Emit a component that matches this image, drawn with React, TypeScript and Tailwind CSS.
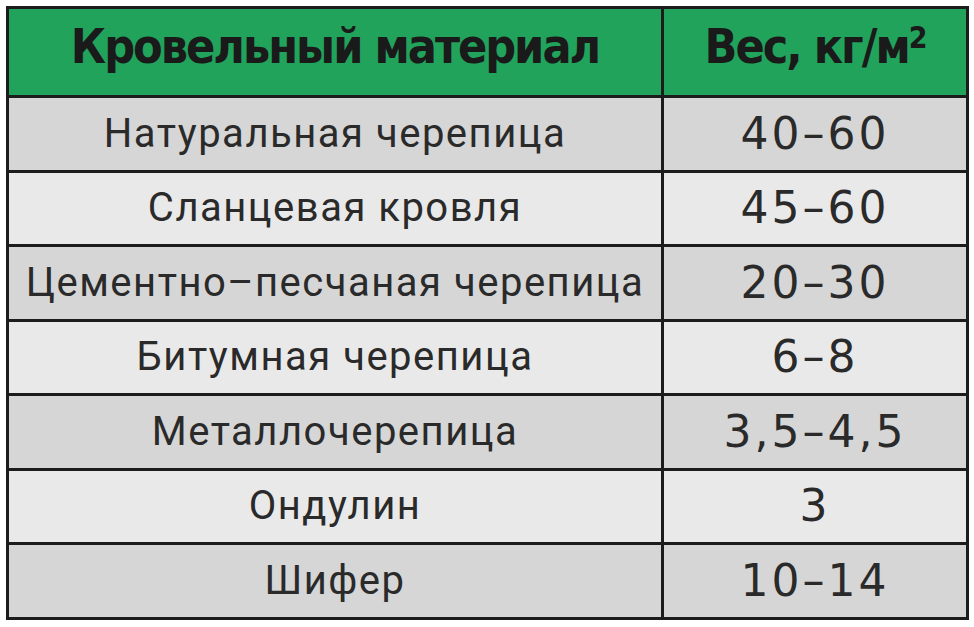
const rows: [string, string][] = [
  ["Натуральная черепица", "40–60"],
  ["Сланцевая кровля", "45–60"],
  ["Цементно–песчаная черепица", "20–30"],
  ["Битумная черепица", "6–8"],
  ["Металлочерепица", "3,5–4,5"],
  ["Ондулин", "3"],
  ["Шифер", "10–14"],
];

export default function App() {
  return (
    <div className="w-[974px] h-[627px] bg-white pl-[6px] pt-[6px]">
      <table className="w-[963px] border-collapse border-[3px] border-[#1c1c1c] text-[#2a2a2a]">
        <thead>
          <tr className="h-[89px] bg-[#21a35c]">
            <th className="w-[655px] border-[3px] border-[#1c1c1c] p-0 pb-[12px] text-center font-['DejaVu_Sans_Condensed','DejaVu_Sans',sans-serif] text-[48px] font-bold tracking-[-2px] text-[#1a1a1a]">
              Кровельный материал
            </th>
            <th className="border-[3px] border-[#1c1c1c] p-0 pb-[12px] text-center font-['DejaVu_Sans_Condensed','DejaVu_Sans',sans-serif] text-[48px] font-bold tracking-[-2px] text-[#1a1a1a]">
              Вес, кг/м<sup className="text-[30px]">2</sup>
            </th>
          </tr>
        </thead>
        <tbody className="text-[40px]">
          {rows.map(([name, weight], i) => (
            <tr key={name} className={`h-[74.5px] ${i % 2 === 0 ? "bg-[#d6d6d6]" : "bg-[#e9e9e9]"}`}>
              <td className="border-[3px] border-[#1c1c1c] p-0 text-center font-['Roboto',sans-serif] tracking-[1.5px]">{name}</td>
              <td className="border-[3px] border-[#1c1c1c] p-0 text-center font-['DejaVu_Sans',sans-serif] text-[44px] tracking-[3px]">{weight}</td>
            </tr>
          ))}
        </tbody>
      </table>
    </div>
  );
}
